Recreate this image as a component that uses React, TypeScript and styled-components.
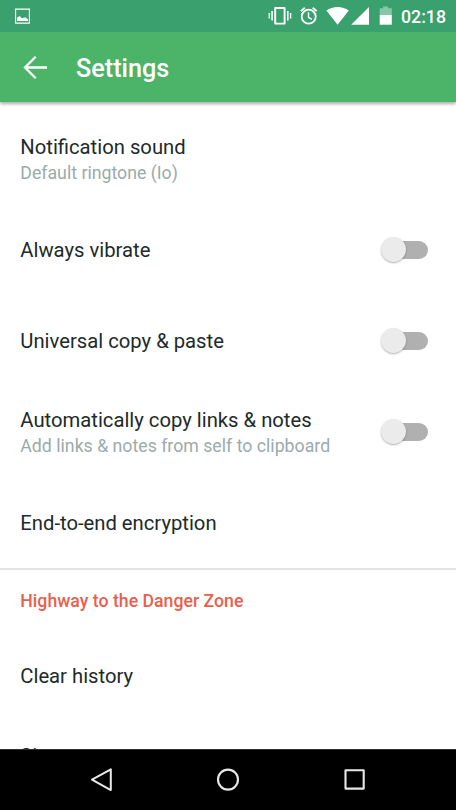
import React from "react";
import styled, { createGlobalStyle } from "styled-components";

const GlobalStyle = createGlobalStyle`
  * { box-sizing: border-box; }
  body { margin: 0; background: #fff; font-family: Roboto, "Liberation Sans", sans-serif; }
`;

const Screen = styled.div`
  display: flex;
  flex-direction: column;
  width: 456px;
  height: 810px;
  overflow: hidden;
  background: #fff;
`;

const StatusBar = styled.div`
  display: flex;
  flex: 0 0 32px;
  align-items: center;
  justify-content: space-between;
  padding: 0 10px 0 15px;
  background: #3aa06e;
  color: #fff;
  z-index: 2;
  svg { display: block; }
`;

const StatusGroup = styled.div`
  display: flex;
  align-items: center;
`;

const Clock = styled.span`
  margin: 2px 0 0 8px;
  font-size: 17.73px;
  font-weight: 500;
  line-height: 20px;
`;

const AppBar = styled.header`
  display: flex;
  flex: 0 0 70px;
  align-items: center;
  gap: 29px;
  padding-left: 23px;
  background: #4cb469;
  color: #fff;
  box-shadow: 0 2px 3px rgba(0, 0, 0, 0.32);
  z-index: 1;
`;

const BackIcon = styled.svg`
  display: block;
  width: 24px;
  height: 24px;
  margin-top: 1px;
`;

const Title = styled.h1`
  margin: 3px 0 0;
  font-size: 25.2px;
  font-weight: 500;
  line-height: 30px;
`;

const List = styled.main`
  flex: 1;
  min-height: 0;
  padding-top: 11px;
  overflow: hidden;
`;

const Row = styled.div<{ $clipped?: boolean }>`
  display: flex;
  height: 91px;
  align-items: ${(p) => (p.$clipped ? "flex-start" : "center")};
  justify-content: space-between;
  padding: ${(p) => (p.$clipped ? "21px" : "0")} 28px 0 20.3px;
`;

const Label = styled.div`
  padding-top: 1px;
  color: #202a29;
  font-size: 20.24px;
  line-height: 26px;
`;

const Summary = styled.div`
  margin-bottom: -2px;
  padding-top: 1px;
  color: #9aabaa;
  font-size: 17.73px;
  line-height: 25px;
`;

const Section = styled.h2`
  display: flex;
  align-items: center;
  height: 62px;
  margin: 0;
  padding: 1px 20.3px 0;
  border-top: 2px solid #e4e4e4;
  color: #e95f4e;
  font-size: 17.7px;
  font-weight: 500;
`;

const Track = styled.div`
  display: flex;
  align-items: center;
  width: 42px;
  height: 18px;
  border-radius: 9px;
  background: #b0b0b0;
`;

const Thumb = styled.div`
  flex: none;
  width: 25px;
  height: 25px;
  margin-left: -5px;
  border-radius: 50%;
  background: #ebebeb;
  box-shadow: 0 1px 2px rgba(0, 0, 0, 0.3);
`;

const NavBar = styled.nav`
  flex: 0 0 61px;
  background: #000;
  border-top: 1px solid #303030;
  display: flex;
  align-items: center;
  justify-content: center;
  gap: 102px;
  svg { display: block; }
`;

const settings = [
  { label: "Notification sound", summary: "Default ringtone (Io)" },
  { label: "Always vibrate", toggle: true },
  { label: "Universal copy & paste", toggle: true },
  { label: "Automatically copy links & notes", summary: "Add links & notes from self to clipboard", toggle: true },
  { label: "End-to-end encryption" },
];

const StatusIcons = () => (
  <svg width="126" height="32" viewBox="267 0 126 32" fill="none" stroke="#fff">
    <path d="M275.2 8h9.4v15.6h-9.4z" strokeWidth="1.9" strokeLinejoin="round" />
    <path d="M272.1 11v9.5M287.8 11v9.5" strokeWidth="1.6" />
    <path d="M269.3 13v5.5M290.6 13v5.5" strokeWidth="1.4" />
    <circle cx="308.7" cy="16.7" r="7" strokeWidth="1.8" />
    <path d="M308.5 12.3v5l3.4 2.1" strokeWidth="1.4" />
    <path d="M300.8 11.1l4-3.4M312.7 7.7l4 3.4" strokeWidth="1.8" />
    <path d="M326.4 10.5C332.8 5.7 342.4 5.7 348.8 10.5L337.6 24.7z" fill="#fff" stroke="none" />
    <path d="M369 7v17.8h-17.8z" fill="#fff" stroke="none" />
    <path d="M379.7 8.2h3.4V6.4h5v1.8h3.7V15h-12.1z" fill="#fff" fillOpacity=".4" stroke="none" />
    <path d="M379.7 15h12.1v9.7h-12.1z" fill="#fff" stroke="none" />
  </svg>
);

export default function App() {
  return (
    <>
      <GlobalStyle />
      <Screen>
        <StatusBar>
          <svg width="15" height="16" viewBox="0 0 15 16">
            <path d="M.6 1.1h13.8v14H.6z" fill="none" stroke="#fff" strokeWidth="1.1" />
            <path d="M2 13v-3.2l2.5-1.9 2.5 2.3 3.3-.9L13 11.6V13z" fill="#fff" />
          </svg>
          <StatusGroup>
            <StatusIcons />
            <Clock>02:18</Clock>
          </StatusGroup>
        </StatusBar>
        <AppBar>
          <BackIcon viewBox="0 0 24 24" fill="none" stroke="#fff" strokeWidth="2.3">
            <path d="M24 11.5H2M12.7.8L2 11.5l10.7 10.7" />
          </BackIcon>
          <Title>Settings</Title>
        </AppBar>
        <List>
          {settings.map((s) => (
            <Row key={s.label}>
              <div>
                <Label>{s.label}</Label>
                {s.summary && <Summary>{s.summary}</Summary>}
              </div>
              {s.toggle && (
                <Track role="switch" aria-checked={false} aria-label={s.label}>
                  <Thumb />
                </Track>
              )}
            </Row>
          ))}
          <Section>Highway to the Danger Zone</Section>
          <Row>
            <Label>Clear history</Label>
          </Row>
          <Row $clipped>
            <Label>Sign out</Label>
          </Row>
        </List>
        <NavBar>
          <svg width="26" height="26" viewBox="0 0 26 26" fill="none" stroke="#e8e8e8" strokeWidth="2" strokeLinejoin="round">
            <path d="M22.8 2.3v20.8L4 12.7z" />
          </svg>
          <svg width="24" height="24" viewBox="0 0 24 24" fill="none" stroke="#e8e8e8" strokeWidth="2.1">
            <circle cx="12" cy="11.6" r="10" />
          </svg>
          <svg width="26" height="26" viewBox="0 0 26 26" fill="none" stroke="#e8e8e8" strokeWidth="2.1" strokeLinejoin="round">
            <path d="M3.5 3.3h18.2v18.3H3.5z" />
          </svg>
        </NavBar>
      </Screen>
    </>
  );
}
